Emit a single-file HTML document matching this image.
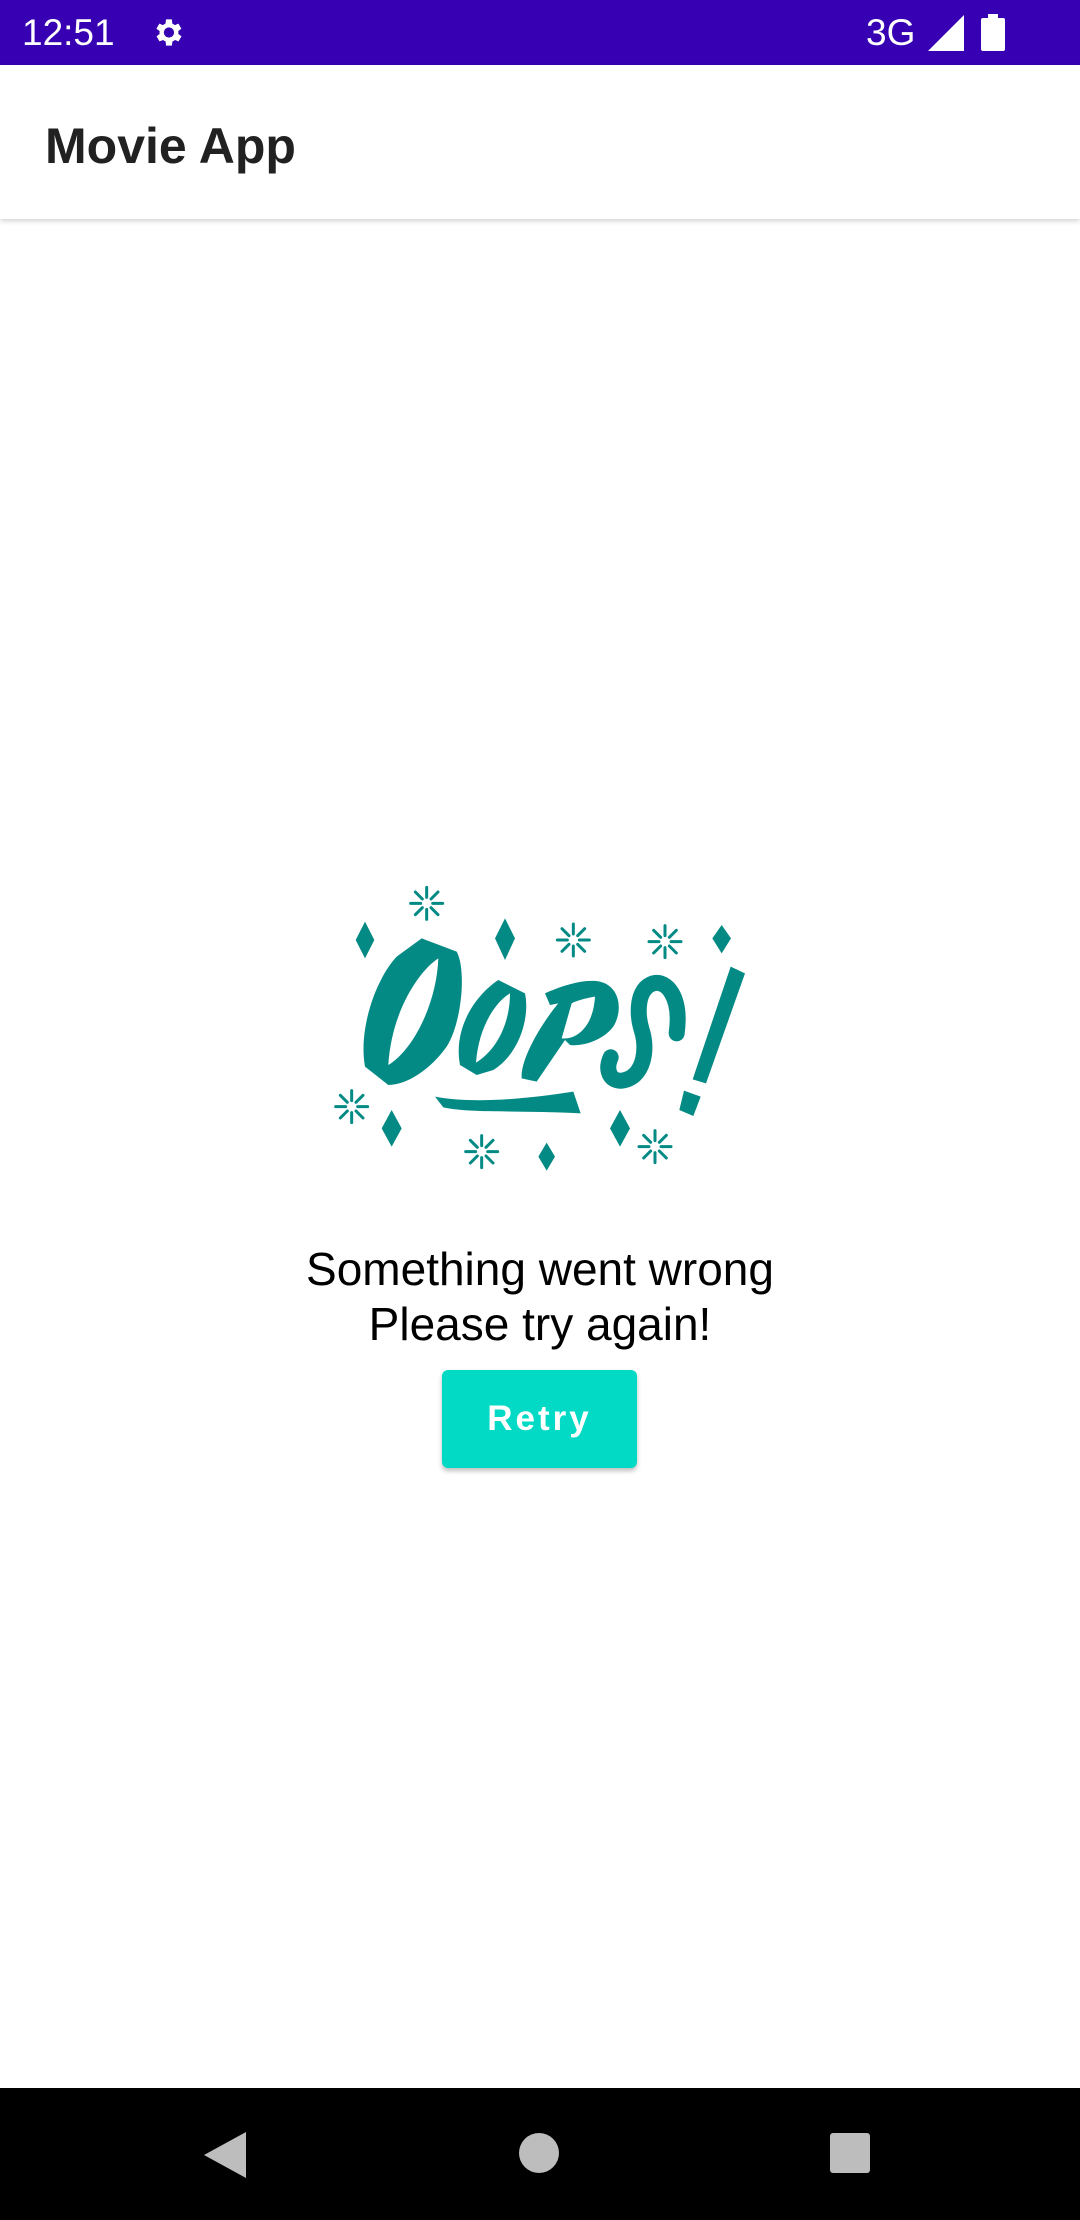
<!DOCTYPE html>
<html><head><meta charset="utf-8"><style>
*{margin:0;padding:0;box-sizing:border-box}
body{width:1080px;height:2220px;background:#fff;position:relative;overflow:hidden;font-family:"Liberation Sans",sans-serif}
.sb{position:absolute;left:0;top:0;width:1080px;height:65px;background:#3700B3;color:#fff}
.ab{position:absolute;left:0;top:65px;width:1080px;height:154px;background:#fff;box-shadow:0 2px 5px rgba(0,0,0,.18)}
.ab span{position:absolute;left:45px;top:52px;font-size:50px;font-weight:bold;color:#212121}
.msg{position:absolute;left:0;width:1080px;top:1242px;text-align:center;font-size:46px;line-height:55px;color:#000}
.btn{position:absolute;left:442px;top:1370px;width:195px;height:98px;background:#03DAC5;border-radius:6px;box-shadow:0 3px 5px rgba(0,0,0,.25);color:#fff;font-weight:bold;font-size:35px;letter-spacing:3px;text-align:center;line-height:98px}
.nb{position:absolute;left:0;top:2088px;width:1080px;height:132px;background:#000}
</style></head><body>
<div class="sb">
<span style="position:absolute;left:22px;top:12px;font-size:37px">12:51</span>
<svg style="position:absolute;left:150px;top:15px" width="35" height="35" viewBox="0 0 24 24"><path fill="#fff" d="M19.4 13a7.5 7.5 0 000-2l2.1-1.6-2-3.5-2.5 1a7 7 0 00-1.7-1L15 3h-4l-.4 2.9a7 7 0 00-1.7 1l-2.5-1-2 3.5L6.6 11a7.5 7.5 0 000 2l-2.1 1.6 2 3.5 2.5-1a7 7 0 001.7 1L11 21h4l.4-2.9a7 7 0 001.7-1l2.5 1 2-3.5zM13 15.5a3.5 3.5 0 110-7 3.5 3.5 0 010 7z"/></svg>
<span style="position:absolute;left:866px;top:12px;font-size:37px">3G</span>
<svg style="position:absolute;left:928px;top:15px" width="36" height="36" viewBox="0 0 36 36"><path fill="#fff" d="M36 0V36H0Z"/></svg>
<div style="position:absolute;left:981px;top:18px;width:24px;height:33px;background:#fff;border-radius:2px"></div>
<div style="position:absolute;left:988px;top:14px;width:10px;height:5px;background:#fff"></div>
</div>
<div class="ab"><span>Movie App</span></div>
<svg style="position:absolute;left:320px;top:870px" width="440" height="320" viewBox="0 0 1320 960">
<g fill="#038a84">
<path fill-rule="evenodd" d="M305,205 L410,245 C440,300 425,460 380,530 C330,600 260,645 205,645 L135,590 C115,480 165,330 230,260 Z M355,265 C300,300 215,420 205,585 C280,540 350,400 355,265 Z"/>
<path fill-rule="evenodd" d="M535,330 L615,370 C630,440 600,550 520,600 L470,615 L420,585 C400,480 460,380 535,330 Z M570,370 C520,400 475,480 468,578 C530,540 570,460 570,370 Z"/>
<path fill-rule="evenodd" d="M675,370 C720,350 790,325 840,335 C900,350 910,420 880,470 C850,510 790,530 750,525 L735,510 L650,635 L605,625 C600,560 680,440 715,400 L690,405 Z M825,380 C795,385 770,392 755,400 L725,505 C770,510 820,470 825,380 Z"/>
<path d="M345,680 C450,700 600,690 760,665 L782,730 C600,720 450,730 370,712 Z"/>
<path d="M1232,290 L1275,310 L1158,640 L1118,628 Z"/>
<path d="M1092,662 L1142,680 L1120,738 L1078,720 Z"/>
<path d="M135,155l28,55l-28,55l-28,-55z M555,145l30,60l-30,65l-30,-65z M1205,165l28,40l-28,45l-28,-45z M215,720l30,55l-30,55l-30,-55z M900,720l30,55l-30,55l-30,-55z M680,818l25,42l-25,42l-25,-42z"/>
</g>
<path d="M1070,490 C1085,380 1040,330 1000,340 C950,355 950,430 965,480 C985,540 970,625 905,632 C870,635 855,600 872,562" fill="none" stroke="#038a84" stroke-width="48" stroke-linecap="round"/>
<g stroke="#038a84" stroke-width="9" stroke-linecap="round">
<g id="sp" transform="translate(320,100)"><path d="M0,-18V-48M0,18V48M-18,0H-48M18,0H48M13,-13L34,-34M-13,13L-34,34M13,13L34,34M-13,-13L-34,-34"/></g>
<use href="#sp" transform="translate(440,110)"/>
<use href="#sp" transform="translate(715,115)"/>
<use href="#sp" transform="translate(-225,610)"/>
<use href="#sp" transform="translate(165,745)"/>
<use href="#sp" transform="translate(685,730)"/>
</g>
</svg>
<div class="msg">Something went wrong<br>Please try again!</div>
<div class="btn">Retry</div>
<div class="nb">
<svg style="position:absolute;left:204px;top:44px" width="42" height="46" viewBox="0 0 42 46"><path fill="#bdbdbd" d="M42,0V46L0,23Z"/></svg>
<div style="position:absolute;left:519px;top:45px;width:40px;height:40px;border-radius:50%;background:#bdbdbd"></div>
<div style="position:absolute;left:830px;top:45px;width:40px;height:40px;border-radius:3px;background:#bdbdbd"></div>
</div>
</body></html>
